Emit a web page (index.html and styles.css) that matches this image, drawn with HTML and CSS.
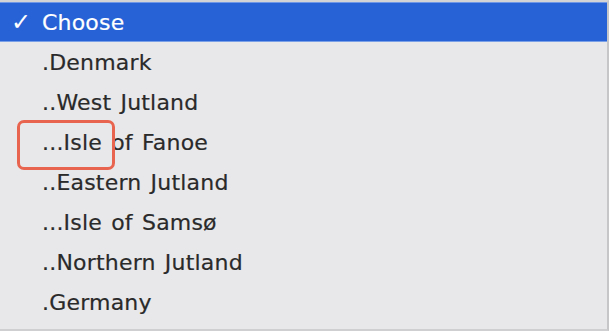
FILE: index.html
```html
<!DOCTYPE html>
<html>
<head>
<meta charset="utf-8">
<link rel="stylesheet" href="styles.css">
</head>
<body>
<div class="menu">
  <div class="option selected"><span class="check">✓</span><span class="label">Choose</span></div>
  <div class="option"><span class="check"></span><span class="label">.Denmark</span></div>
  <div class="option"><span class="check"></span><span class="label">..West Jutland</span></div>
  <div class="option"><span class="check"></span><span class="label">...Isle of Fanoe</span></div>
  <div class="option"><span class="check"></span><span class="label">..Eastern Jutland</span></div>
  <div class="option"><span class="check"></span><span class="label">...Isle of Samsø</span></div>
  <div class="option"><span class="check"></span><span class="label">..Northern Jutland</span></div>
  <div class="option"><span class="check"></span><span class="label">.Germany</span></div>
  <div class="highlight"></div>
</div>
</body>
</html>
```
FILE: styles.css
```css
html, body {
  margin: 0;
  padding: 0;
  background: #e8e8ea;
}
.menu {
  position: relative;
  width: 607px;
  height: 327px;
  background: #e8e8ea;
  border-top: 2px solid #d3d3d6;
  border-right: 2px solid #c6c6c8;
  border-bottom: 2px solid #cfcfd1;
  box-sizing: content-box;
  font-family: "DejaVu Sans", Verdana, sans-serif;
  font-size: 22px;
  color: #2a2a2a;
}
.option {
  display: flex;
  align-items: center;
  height: 40px;
}
.label {
  letter-spacing: 0.2px;
  word-spacing: 2px;
  -webkit-text-stroke: 0.2px currentColor;
}
.check {
  width: 42px;
  padding-left: 11px;
  box-sizing: border-box;
  font-size: 24px;
  font-weight: bold;
}
.selected {
  background: #2762d6;
  color: #ffffff;
  box-shadow: inset 0 1px 0 #6f97e6, inset 0 -1px 0 #7aa0e8;
}
.highlight {
  position: absolute;
  left: 17px;
  top: 118px;
  width: 92px;
  height: 44px;
  border: 3px solid #e8644f;
  border-radius: 7px;
}
```
